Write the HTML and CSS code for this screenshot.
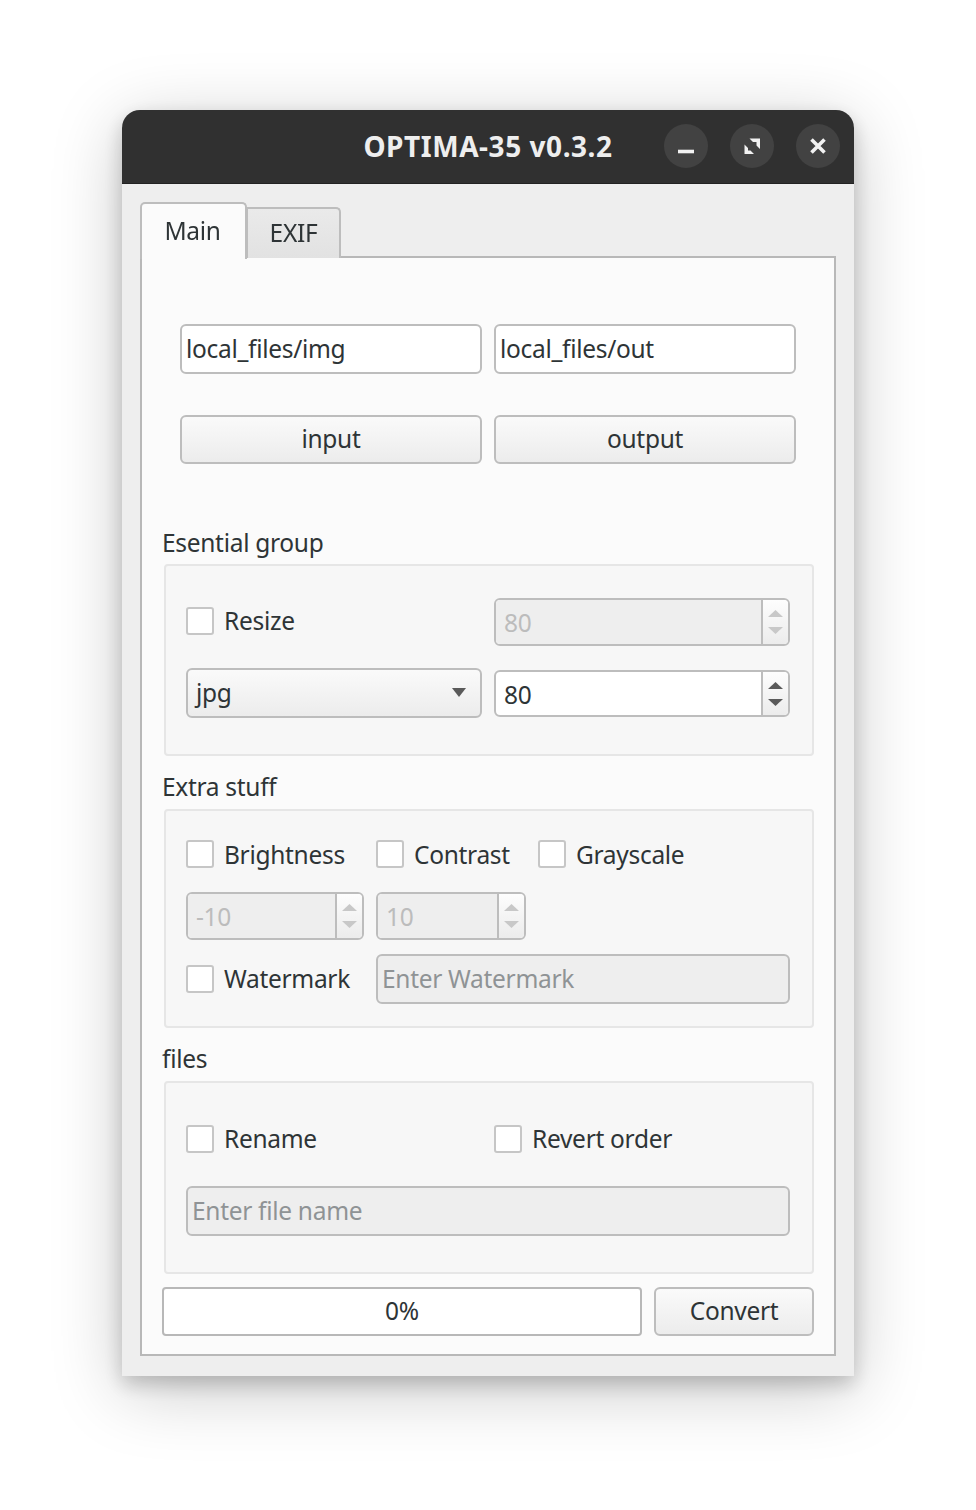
FILE: index.html
```html
<!DOCTYPE html>
<html lang="en">
<head>
<meta charset="utf-8">
<title>OPTIMA-35 v0.3.2</title>
<link rel="stylesheet" href="styles.css">
</head>
<body>
<div class="window">
  <header class="titlebar">
    <div class="title">OPTIMA-35 v0.3.2</div>
    <div class="wm-buttons">
      <div class="wm-btn"><svg viewBox="0 0 24 24" class="wm-icon"><path d="M4 17.5H20" /></svg></div>
      <div class="wm-btn"><svg viewBox="0 0 24 24" class="wm-fill"><path d="M9.5 4.5H20V15L16.5 11.5V8H13z" /><path d="M4.5 10.5L8 14V16.5H10.5L14 20H4.5z" /></svg></div>
      <div class="wm-btn"><svg viewBox="0 0 24 24" class="wm-icon"><path d="M5.5 5.5L18.5 18.5M18.5 5.5L5.5 18.5" /></svg></div>
    </div>
  </header>
  <main class="body">
    <div class="tabs">
      <div class="tab tab-active">Main</div>
      <div class="tab">EXIF</div>
    </div>
    <section class="pane">
      <div class="paths">
        <div class="field">local_files/img</div>
        <div class="field">local_files/out</div>
        <div class="btn">input</div>
        <div class="btn">output</div>
      </div>

      <div class="group-label label-first">Esential group</div>
      <div class="group group-essential">
        <div class="grid-two">
          <label class="check"><span class="box"></span>Resize</label>
          <div class="spin disabled">
            <div class="spin-value">80</div>
            <div class="spin-arrows"><svg viewBox="0 0 15 7" class="arrow"><path d="M7.5 0L15 7H0z"/></svg><svg viewBox="0 0 15 7" class="arrow"><path d="M0 0H15L7.5 7z"/></svg></div>
          </div>
          <div class="combo">jpg<svg viewBox="0 0 14 9" class="combo-arrow"><path d="M0 0H14L7 9z"/></svg></div>
          <div class="spin spin-live">
            <div class="spin-value">80</div>
            <div class="spin-arrows"><svg viewBox="0 0 15 7" class="arrow"><path d="M7.5 0L15 7H0z"/></svg><svg viewBox="0 0 15 7" class="arrow"><path d="M0 0H15L7.5 7z"/></svg></div>
          </div>
        </div>
      </div>

      <div class="group-label">Extra stuff</div>
      <div class="group group-extra">
        <div class="row row-checks">
          <label class="check check-bright"><span class="box"></span>Brightness</label>
          <label class="check check-contrast"><span class="box"></span>Contrast</label>
          <label class="check"><span class="box"></span>Grayscale</label>
        </div>
        <div class="row row-spins">
          <div class="spin disabled spin-bright">
            <div class="spin-value">-10</div>
            <div class="spin-arrows"><svg viewBox="0 0 15 7" class="arrow"><path d="M7.5 0L15 7H0z"/></svg><svg viewBox="0 0 15 7" class="arrow"><path d="M0 0H15L7.5 7z"/></svg></div>
          </div>
          <div class="spin disabled spin-contrast">
            <div class="spin-value">10</div>
            <div class="spin-arrows"><svg viewBox="0 0 15 7" class="arrow"><path d="M7.5 0L15 7H0z"/></svg><svg viewBox="0 0 15 7" class="arrow"><path d="M0 0H15L7.5 7z"/></svg></div>
          </div>
        </div>
        <div class="row row-water">
          <label class="check check-bright"><span class="box"></span>Watermark</label>
          <div class="field field-off grow">Enter Watermark</div>
        </div>
      </div>

      <div class="group-label">files</div>
      <div class="group group-files">
        <div class="grid-two">
          <label class="check"><span class="box"></span>Rename</label>
          <label class="check"><span class="box"></span>Revert order</label>
        </div>
        <div class="field field-off name-field">Enter file name</div>
      </div>

      <div class="footer">
        <div class="progress">0%</div>
        <div class="btn btn-convert">Convert</div>
      </div>
    </section>
  </main>
</div>
</body>
</html>
```
FILE: styles.css
```css
* { box-sizing: border-box; }
html, body { margin: 0; height: 100%; background: #fff; }
body {
  padding: 110px 122px 0;
  font-family: "Noto Sans", sans-serif;
  font-size: 24.5px;
  letter-spacing: -.3px;
  line-height: 34px;
  color: #2e3436;
  overflow: hidden;
}
.window {
  width: 732px;
  height: 1266px;
  background: #eeeeee;
  border-radius: 18px 18px 0 0;
  box-shadow: 0 8px 20px rgba(0, 0, 0, .2), 0 14px 70px rgba(0, 0, 0, .22);
  filter: blur(.7px);
}
.titlebar {
  position: relative;
  height: 74px;
  background: #303030;
  border-bottom: 1px solid #222;
  border-radius: 18px 18px 0 0;
  display: flex;
  align-items: center;
  justify-content: center;
}
.title {
  font-weight: 700;
  font-size: 28px;
  letter-spacing: .55px;
  color: #eeeeee;
  margin-bottom: 1px;
}
.wm-buttons {
  position: absolute;
  top: 14px;
  right: 14px;
  display: flex;
  gap: 22px;
}
.wm-btn {
  width: 44px;
  height: 44px;
  border-radius: 50%;
  background: #424242;
  display: flex;
  align-items: center;
  justify-content: center;
}
.wm-icon {
  width: 24px;
  height: 24px;
  fill: none;
  stroke: #f2f2f2;
  stroke-width: 3.6;
}
.wm-fill {
  width: 24px;
  height: 24px;
  fill: #f2f2f2;
}
.body { padding: 18px 18px 0; }
.tabs { display: flex; align-items: flex-end; height: 56px; position: relative; z-index: 1; }
.tab {
  width: 94px;
  height: 51px;
  padding-top: 7px;
  text-align: center;
  background: linear-gradient(#eaeaea, #e2e2e2);
  border: 2px solid #bdbdbd;
  border-left-width: 1px;
  border-bottom: 0;
  border-radius: 0 5px 0 0;
}
.tab-active {
  width: 107px;
  height: 57px;
  padding-top: 10px;
  padding-right: 2px;
  background: #fbfbfb;
  border-left-width: 2px;
  border-radius: 5px 5px 0 0;
  margin-bottom: -1px;
}
.pane {
  height: 1100px;
  margin-top: -2px;
  background: #fbfbfb;
  border: 2px solid #b8b8b8;
  padding: 0 20px;
}
.paths {
  display: grid;
  grid-template-columns: 302px 302px;
  column-gap: 12px;
  row-gap: 41px;
  padding: 66px 0 0 18px;
}
.field {
  height: 50px;
  background: #fff;
  border: 2px solid #bdbdbd;
  border-radius: 6px;
  padding: 6px 4px 0;
  white-space: nowrap;
}
.field-off { background: #eeeeee; color: #8f9395; }
.grow { flex: 1; }
.btn {
  height: 49px;
  padding-top: 5px;
  text-align: center;
  background: linear-gradient(#fafafa, #ececec);
  border: 2px solid #bdbdbd;
  border-radius: 6px;
}
.group-label { height: 39px; margin-top: 14px; }
.label-first { height: 38px; margin-top: 62px; }
.group {
  margin-left: 2px;
  width: 650px;
  background: #f7f7f7;
  border: 2px solid #e6e6e6;
  border-radius: 4px;
  padding: 0 22px 0 20px;
}
.group-essential { height: 192px; padding-top: 32px; }
.group-extra { height: 219px; padding-top: 29px; }
.group-files { height: 193px; padding-top: 39px; }
.grid-two {
  display: grid;
  grid-template-columns: 296px 296px;
  column-gap: 12px;
  row-gap: 22px;
  align-items: center;
}
.check { display: flex; align-items: center; white-space: nowrap; }
.group-essential .check { margin-bottom: 3px; }
.row-checks .check { padding-top: 2px; }
.row-checks .box { margin-top: -2px; }
.box {
  width: 28px;
  height: 28px;
  margin-right: 10px;
  background: #fff;
  border: 2px solid #c6c6c6;
  border-radius: 3px;
  flex: none;
}
.spin {
  display: flex;
  height: 48px;
  background: #fff;
  border: 2px solid #bdbdbd;
  border-radius: 6px;
  overflow: hidden;
}
.spin-live { height: 47px; margin-top: 1px; }
.spin-value { flex: 1; padding: 6px 8px 0; border-right: 2px solid #bdbdbd; }
.spin-arrows {
  width: 25px;
  background: linear-gradient(#fdfdfd, #ececec);
  display: flex;
  flex-direction: column;
  align-items: center;
  justify-content: center;
  gap: 10px;
  fill: #5a5a5a;
}
.arrow { width: 15px; height: 7px; display: block; }
.disabled .spin-value { background: #eeeeee; color: #bcbcbc; }
.disabled .spin-arrows { fill: #c8c8c8; }
.combo {
  position: relative;
  height: 50px;
  padding: 6px 8px 0;
  background: linear-gradient(#fafafa, #ececec);
  border: 2px solid #bdbdbd;
  border-radius: 6px;
}
.combo-arrow {
  position: absolute;
  right: 14px;
  top: 18px;
  width: 14px;
  height: 9px;
  fill: #5a5a5a;
}
.row { display: flex; align-items: center; }
.row-checks { height: 28px; }
.check-bright { width: 190px; }
.check-contrast { width: 162px; }
.row-spins { gap: 12px; margin-top: 24px; }
.spin-bright { width: 178px; }
.spin-contrast { width: 150px; }
.row-water { margin-top: 14px; }
.name-field { margin-top: 30px; }
.footer { display: flex; gap: 12px; margin-top: 13px; }
.progress {
  width: 480px;
  height: 49px;
  padding-top: 5px;
  text-align: center;
  background: #fff;
  border: 2px solid #b8b8b8;
  border-radius: 4px;
}
.btn-convert { width: 160px; }
```
